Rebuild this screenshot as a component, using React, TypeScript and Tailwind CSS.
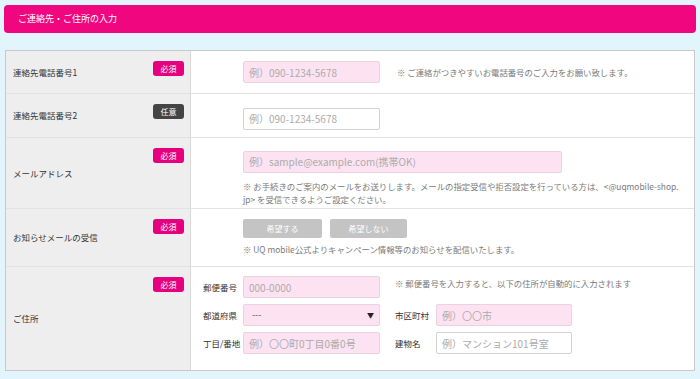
const font = { fontFamily: '"Noto Sans CJK JP", "Noto Sans", sans-serif' };

function Badge({ required }: { required: boolean }) {
    return (
        <span className={`absolute right-[6px] top-[10px] w-[31px] h-[15px] rounded-[3px] flex items-center justify-center text-[8px] text-white ${required ? "bg-[#e5007f]" : "bg-[#444444]"}`}>
            {required ? "必須" : "任意"}
        </span>
    );
}

function Field({ ph, w, pink = true }: { ph: string; w: string; pink?: boolean }) {
    return (
        <input
            readOnly
            placeholder={ph}
            className={`${w} h-[22px] shrink-0 rounded-[2px] border px-[5px] text-[10px] outline-none placeholder:text-[#ababab] ${pink ? "bg-[#fde3f1] border-[#ecd2e0]" : "bg-white border-[#d2d2d2]"}`}
        />
    );
}

function Row({ label, required, h, last = false, children, body = "pl-[52px] pt-[10px]" }: {
    label: string; required: boolean; h: string; last?: boolean; children: React.ReactNode; body?: string;
}) {
    return (
        <div className={`flex ${h} ${last ? "" : "border-b border-[#e2e2e2]"}`}>
            <div className="relative w-[185px] shrink-0 bg-[#eeeeee] border-r border-[#d8d8d8] flex items-center pl-[7px] text-[8.5px] text-[#333]">
                {label}
                <Badge required={required} />
            </div>
            <div className={`flex-1 bg-white ${body}`}>{children}</div>
        </div>
    );
}

function AddrLabel({ text, w }: { text: string; w: string }) {
    return <span className={`${w} shrink-0 text-[8.5px] text-[#333]`}>{text}</span>;
}

export default function App() {
    return (
        <div style={font} className="w-[700px] h-[379px] overflow-hidden bg-[#e2f5fc] pt-[5px]">
            <div className="mx-[4px] h-[28px] rounded-[4px] bg-[#f0077f] flex items-center pl-[14px] text-[9px] text-white">
                ご連絡先・ご住所の入力
            </div>

            <div className="mx-[5px] mt-[17px] border border-[#c9c9c9] bg-white">
                <Row label="連絡先電話番号1" required h="h-[43px]">
                    <div className="flex items-center">
                        <Field ph="例）090-1234-5678" w="w-[137px]" />
                        <span className="ml-[17px] text-[8.4px] text-[#7a7a7a]">※ ご連絡がつきやすいお電話番号のご入力をお願い致します。</span>
                    </div>
                </Row>

                <Row label="連絡先電話番号2" required={false} h="h-[44px]">
                    <Field ph="例）090-1234-5678" w="w-[137px]" pink={false} />
                </Row>

                <Row label="メールアドレス" required h="h-[71px]" body="pl-[52px] pt-[9px]">
                    <Field ph="例）sample@example.com(携帯OK)" w="w-[319px]" />
                    <p className="mt-[7px] text-[8.4px] leading-[13px] text-[#7a7a7a] whitespace-nowrap">
                        ※ お手続きのご案内のメールをお送りします。メールの指定受信や拒否設定を行っている方は、&lt;@uqmobile-shop.<br />
                        jp&gt; を受信できるようご設定ください。
                    </p>
                </Row>

                <Row label="お知らせメールの受信" required h="h-[58px]">
                    <div className="flex gap-[8px]">
                        <span className="w-[79px] h-[19px] rounded-[2px] bg-[#c4c4c4] flex items-center justify-center text-[8px] text-white">希望する</span>
                        <span className="w-[77px] h-[19px] rounded-[2px] bg-[#c4c4c4] flex items-center justify-center text-[8px] text-white">希望しない</span>
                    </div>
                    <p className="mt-[5px] text-[8.4px] text-[#7a7a7a]">※ UQ mobile公式よりキャンペーン情報等のお知らせを配信いたします。</p>
                </Row>

                <Row label="ご住所" required h="h-[103px]" last body="pl-[12px] pt-[9px]">
                    <div className="flex gap-[15px]">
                        <div className="flex flex-col gap-[6px]">
                            <div className="flex items-center">
                                <AddrLabel text="郵便番号" w="w-[40px]" />
                                <Field ph="000-0000" w="w-[137px]" />
                            </div>
                            <div className="flex items-center">
                                <AddrLabel text="都道府県" w="w-[40px]" />
                                <div className="w-[137px] h-[22px] rounded-[2px] border border-[#ecd2e0] bg-[#fde3f1] flex items-center justify-between pl-[8px] pr-[5px] text-[9px] text-[#555]">
                                    <span>---</span>
                                    <span className="text-[7px] text-[#222]">▼</span>
                                </div>
                            </div>
                            <div className="flex items-center">
                                <AddrLabel text="丁目/番地" w="w-[40px]" />
                                <Field ph="例）〇〇町0丁目0番0号" w="w-[137px]" />
                            </div>
                        </div>
                        <div className="flex flex-col gap-[6px]">
                            <div className="h-[22px] pt-[1px] text-[8.4px] text-[#7a7a7a]">※ 郵便番号を入力すると、以下の住所が自動的に入力されます</div>
                            <div className="flex items-center">
                                <AddrLabel text="市区町村" w="w-[41px]" />
                                <Field ph="例）〇〇市" w="w-[136px]" />
                            </div>
                            <div className="flex items-center">
                                <AddrLabel text="建物名" w="w-[41px]" />
                                <Field ph="例）マンション101号室" w="w-[136px]" pink={false} />
                            </div>
                        </div>
                    </div>
                </Row>
            </div>
        </div>
    );
}
